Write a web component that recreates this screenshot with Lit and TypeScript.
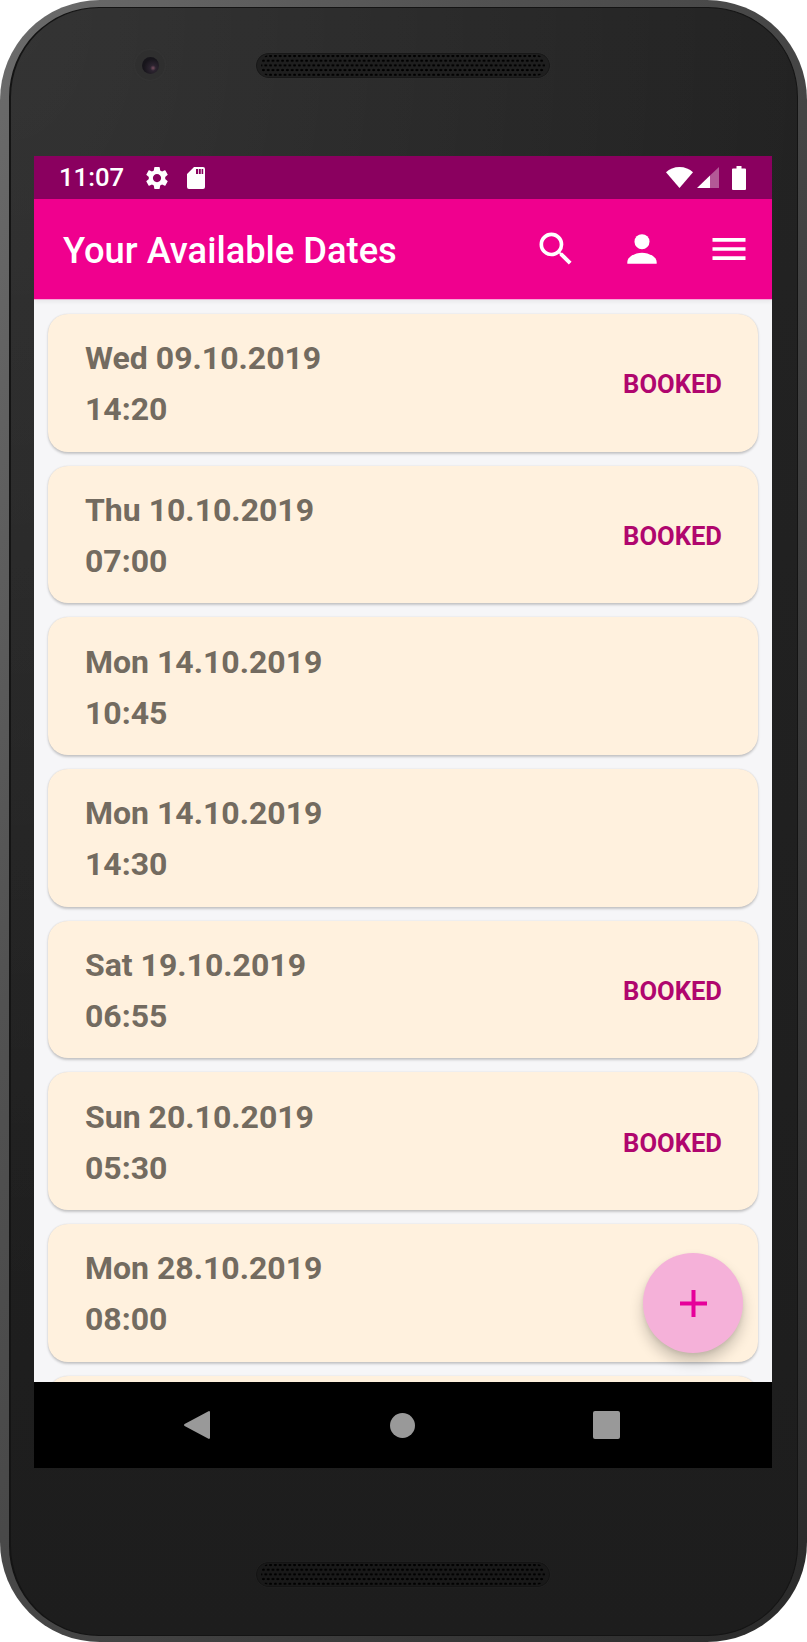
import { LitElement, css, html, svg } from 'lit';
import { customElement, state } from 'lit/decorators.js';

interface DateSlot {
  date: string;
  time: string;
  booked: boolean;
}

const gearPath =
  'M19.14 12.94c.04-.3.06-.61.06-.94 0-.32-.02-.64-.07-.94l2.03-1.58a.49.49 0 0 0 .12-.61l-1.92-3.32a.488.488 0 0 0-.59-.22l-2.39.96c-.5-.38-1.03-.7-1.62-.94l-.36-2.54a.484.484 0 0 0-.48-.41h-3.84c-.24 0-.43.17-.47.41l-.36 2.54c-.59.24-1.13.57-1.62.94l-2.39-.96c-.22-.08-.47 0-.59.22L2.74 8.87c-.12.21-.08.47.12.61l2.03 1.58c-.05.3-.09.63-.09.94s.02.64.07.94l-2.03 1.58a.49.49 0 0 0-.12.61l1.92 3.32c.12.22.37.29.59.22l2.39-.96c.5.38 1.03.7 1.62.94l.36 2.54c.05.24.24.41.48.41h3.84c.24 0 .44-.17.47-.41l.36-2.54c.59-.24 1.13-.56 1.62-.94l2.39.96c.22.08.47 0 .59-.22l1.92-3.32c.12-.22.07-.47-.12-.61l-2.01-1.58zM12 15.6c-1.98 0-3.6-1.62-3.6-3.6s1.62-3.6 3.6-3.6 3.6 1.62 3.6 3.6-1.62 3.6-3.6 3.6z';

const searchPath =
  'M15.5 14h-.79l-.28-.27A6.47 6.47 0 0 0 16 9.5 6.5 6.5 0 1 0 9.5 16c1.61 0 3.09-.59 4.23-1.57l.27.28v.79l5 4.99L20.49 19l-4.99-5zm-6 0C7.01 14 5 11.99 5 9.5S7.01 5 9.5 5 14 7.01 14 9.5 11.99 14 9.5 14z';

@customElement('app-root')
export class AppRoot extends LitElement {
  static styles = css`
    :host {
      display: block;
      width: 807px;
      height: 1642px;
      background: #fff;
      font-family: Roboto, 'Liberation Sans', sans-serif;
    }

    .phone {
      position: relative;
      box-sizing: border-box;
      width: 807px;
      height: 1642px;
      padding: 7px 9px 6px 9px;
      border-radius: 100px;
      background: linear-gradient(115deg, #6c6c6c 0, #525252 30%, #3e3e3e 65%, #2a2a2a 100%);
    }

    .face {
      box-sizing: border-box;
      height: 100%;
      padding: 148px 25px 167px 23px;
      border-radius: 90px;
      border: 1px solid #141414;
      border-left-width: 2px;
      background:
        radial-gradient(ellipse 800px 1300px at 0 0, rgba(255, 255, 255, 0.08), transparent),
        linear-gradient(180deg, #232323 0, #1d1d1d 100%);
    }

    .camera {
      position: absolute;
      left: 135px;
      top: 50px;
      width: 30px;
      height: 30px;
      border-radius: 50%;
      background: #2f2f2f;
      box-shadow: 0 0 2px #3c3c3c;
      display: flex;
      align-items: center;
      justify-content: center;
    }

    .camera i {
      width: 17px;
      height: 17px;
      border-radius: 50%;
      background: radial-gradient(circle at 65% 65%, #7a5060 0, #2c2430 18%, #17151b 60%);
    }

    .speaker {
      position: absolute;
      left: 256px;
      width: 294px;
      height: 25px;
      box-sizing: border-box;
      padding: 2px 5px;
      border-radius: 13px;
      background-image:
        radial-gradient(circle, #000 1px, transparent 1.5px),
        radial-gradient(circle, #000 1px, transparent 1.5px),
        linear-gradient(#1f1f1f, #1f1f1f);
      background-size: 4.8px 9.4px, 4.8px 9.4px, auto;
      background-position: 5px 3px, 7.4px 7.7px, 0 0;
      background-clip: content-box, content-box, border-box;
      box-shadow: inset 0 0 0 1px #181818, 0 0 1px #3e3e3e;
    }

    .speaker.top {
      top: 53px;
    }

    .speaker.bottom {
      top: 1562px;
      background-image:
        radial-gradient(circle, #000 1px, transparent 1.5px),
        radial-gradient(circle, #000 1px, transparent 1.5px),
        linear-gradient(#191919, #191919);
      box-shadow: inset 0 0 0 1px #141414, 0 0 1px #333;
    }

    .screen {
      position: relative;
      height: 100%;
      display: flex;
      flex-direction: column;
      overflow: hidden;
      background: #f6f6f8;
    }

    .status {
      flex: 0 0 43px;
      display: flex;
      align-items: center;
      padding: 0 26px 0 25px;
      background: #8a005f;
      color: #fff;
    }

    .status .time {
      font-size: 25.7px;
      font-weight: 500;
      line-height: 43px;
      margin-right: 22px;
    }

    .status svg {
      display: block;
      fill: #fff;
    }

    .status .sd {
      margin-left: 19px;
    }

    .status .right {
      margin-left: auto;
      display: flex;
      align-items: center;
    }

    .status .signal {
      margin-left: 4px;
    }

    .status .battery {
      margin-left: 13px;
    }

    .appbar {
      flex: 0 0 100px;
      display: flex;
      align-items: center;
      background: #f0008e;
      border-bottom: 1px solid #f6a9d8;
      box-sizing: border-box;
      color: #fff;
      z-index: 1;
      box-shadow: 0 2px 4px rgba(0, 0, 0, 0.06);
    }

    .title {
      flex: 1;
      margin-left: 29px;
      padding-top: 3px;
      font-size: 36.3px;
      font-weight: 500;
      white-space: nowrap;
    }

    .action {
      width: 86.4px;
      height: 100px;
      display: flex;
      align-items: center;
      justify-content: center;
    }

    .action svg {
      display: block;
      width: 44px;
      height: 44px;
      fill: #fff;
    }

    .list {
      flex: 1;
      min-height: 0;
      overflow: hidden;
      display: flex;
      flex-direction: column;
      gap: 14px;
      padding: 14px 14px 0;
    }

    .card {
      flex: 0 0 137.67px;
      box-sizing: border-box;
      display: flex;
      align-items: center;
      justify-content: space-between;
      padding: 0 36px 0 37px;
      border-radius: 20px;
      background: #fff1de;
      box-shadow: 0 1.5px 2.5px rgba(0, 0, 0, 0.2), 0 0 1.5px rgba(0, 0, 0, 0.08);
    }

    .when {
      padding-top: 3px;
      font-size: 32px;
      font-weight: 700;
      line-height: 51px;
      color: #736b60;
      white-space: nowrap;
    }

    .booked {
      padding-top: 3px;
      font-size: 25.6px;
      font-weight: 700;
      color: #b0066e;
    }

    .fab {
      position: absolute;
      left: 609px;
      top: 1097px;
      width: 100px;
      height: 100px;
      border-radius: 50%;
      background: #f5b1d9;
      box-shadow: 0 9px 14px rgba(0, 0, 0, 0.2), 0 2px 4px rgba(0, 0, 0, 0.08);
      display: flex;
      align-items: center;
      justify-content: center;
    }

    .fab svg {
      display: block;
      width: 27px;
      height: 27px;
      fill: #e6009a;
    }

    .nav {
      flex: 0 0 86px;
      position: relative;
      z-index: 2;
      display: grid;
      grid-template-columns: 197px 206px 205px;
      padding-left: 65px;
      align-items: center;
      background: #000;
    }

    .nav svg {
      display: block;
      fill: #999;
    }

    .nav .back {
      margin-left: 85px;
    }

    .nav .home {
      margin-left: 94px;
    }

    .nav .recent {
      margin-left: 91px;
    }
  `;

  @state() private slots: DateSlot[] = [
    { date: 'Wed 09.10.2019', time: '14:20', booked: true },
    { date: 'Thu 10.10.2019', time: '07:00', booked: true },
    { date: 'Mon 14.10.2019', time: '10:45', booked: false },
    { date: 'Mon 14.10.2019', time: '14:30', booked: false },
    { date: 'Sat 19.10.2019', time: '06:55', booked: true },
    { date: 'Sun 20.10.2019', time: '05:30', booked: true },
    { date: 'Mon 28.10.2019', time: '08:00', booked: false },
    { date: '', time: '', booked: false },
  ];

  private renderStatus() {
    return html`
      <div class="status">
        <span class="time">11:07</span>
        <svg width="22" height="22" viewBox="2.4 2.4 19.2 19.2">${svg`<path d=${gearPath}></path>`}</svg>
        <svg class="sd" width="18" height="22" viewBox="0 0 18 22">
          <path d="M7 0h9a2 2 0 0 1 2 2v18a2 2 0 0 1-2 2H2a2 2 0 0 1-2-2V7zM9 2v5h2V2zm2.8 0v5h2V2zm2.8 0v5h1.6V2z" fill-rule="evenodd"></path>
        </svg>
        <div class="right">
          <svg width="27" height="21" viewBox="0 0 27 21">
            <path d="M13.5 21 0 5.2C3.4 2 8.2 0 13.5 0S23.600 2 27 5.200z"></path>
          </svg>
          <svg class="signal" width="22" height="21" viewBox="0 0 22 21">
            <path d="M13 8.500 0 21h13z"></path>
            <path d="M13 8.500 22 0v21h-9z" opacity="0.35"></path>
          </svg>
          <svg class="battery" width="14" height="24" viewBox="0 0 14 24">
            <path d="M4.500 0h5v2.500H13a1 1 0 0 1 1 1V23a1 1 0 0 1-1 1H1a1 1 0 0 1-1-1V3.500a1 1 0 0 1 1-1h3.500z"></path>
          </svg>
        </div>
      </div>
    `;
  }

  private renderAppBar() {
    return html`
      <div class="appbar">
        <div class="title">Your Available Dates</div>
        <div class="action">
          <svg viewBox="0 0 24 24"><path d=${searchPath}></path></svg>
        </div>
        <div class="action">
          <svg viewBox="0 0 24 24">
            <circle cx="12" cy="8" r="4.100"></circle>
            <path d="M4 20v-.800C4 15.800 9 14 12 14s8 1.800 8 5.200v.800z"></path>
          </svg>
        </div>
        <div class="action">
          <svg viewBox="0 0 24 24"><path d="M3 18h18v-2H3v2zm0-5h18v-2H3v2zm0-7v2h18V6H3z"></path></svg>
        </div>
      </div>
    `;
  }

  private renderCard(slot: DateSlot) {
    return html`
      <div class="card">
        <div class="when">
          <div>${slot.date}</div>
          <div>${slot.time}</div>
        </div>
        ${slot.booked ? html`<div class="booked">BOOKED</div>` : null}
      </div>
    `;
  }

  render() {
    return html`
      <div class="phone">
        <div class="camera"><i></i></div>
        <div class="speaker top"></div>
        <div class="speaker bottom"></div>
        <div class="face">
          <div class="screen">
            ${this.renderStatus()} ${this.renderAppBar()}
            <div class="list">${this.slots.map((slot) => this.renderCard(slot))}</div>
            <div class="fab">
              <svg viewBox="0 0 27 27"><path d="M11.500 0h4v11.500H27v4H15.500V27h-4V15.500H0v-4h11.500z"></path></svg>
            </div>
            <div class="nav">
              <svg class="back" width="26" height="28" viewBox="0 0 26 28">
                <path d="M24.500 0.200a1.200 1.200 0 0 1 1.500 1.200v25.200a1.200 1.200 0 0 1-1.500 1.200L.6 15a1.300 1.300 0 0 1 0-2z"></path>
              </svg>
              <svg class="home" width="25" height="25" viewBox="0 0 25 25"><circle cx="12.500" cy="12.500" r="12.500"></circle></svg>
              <svg class="recent" width="27" height="28" viewBox="0 0 27 28"><rect width="27" height="28" rx="2"></rect></svg>
            </div>
          </div>
        </div>
      </div>
    `;
  }
}
